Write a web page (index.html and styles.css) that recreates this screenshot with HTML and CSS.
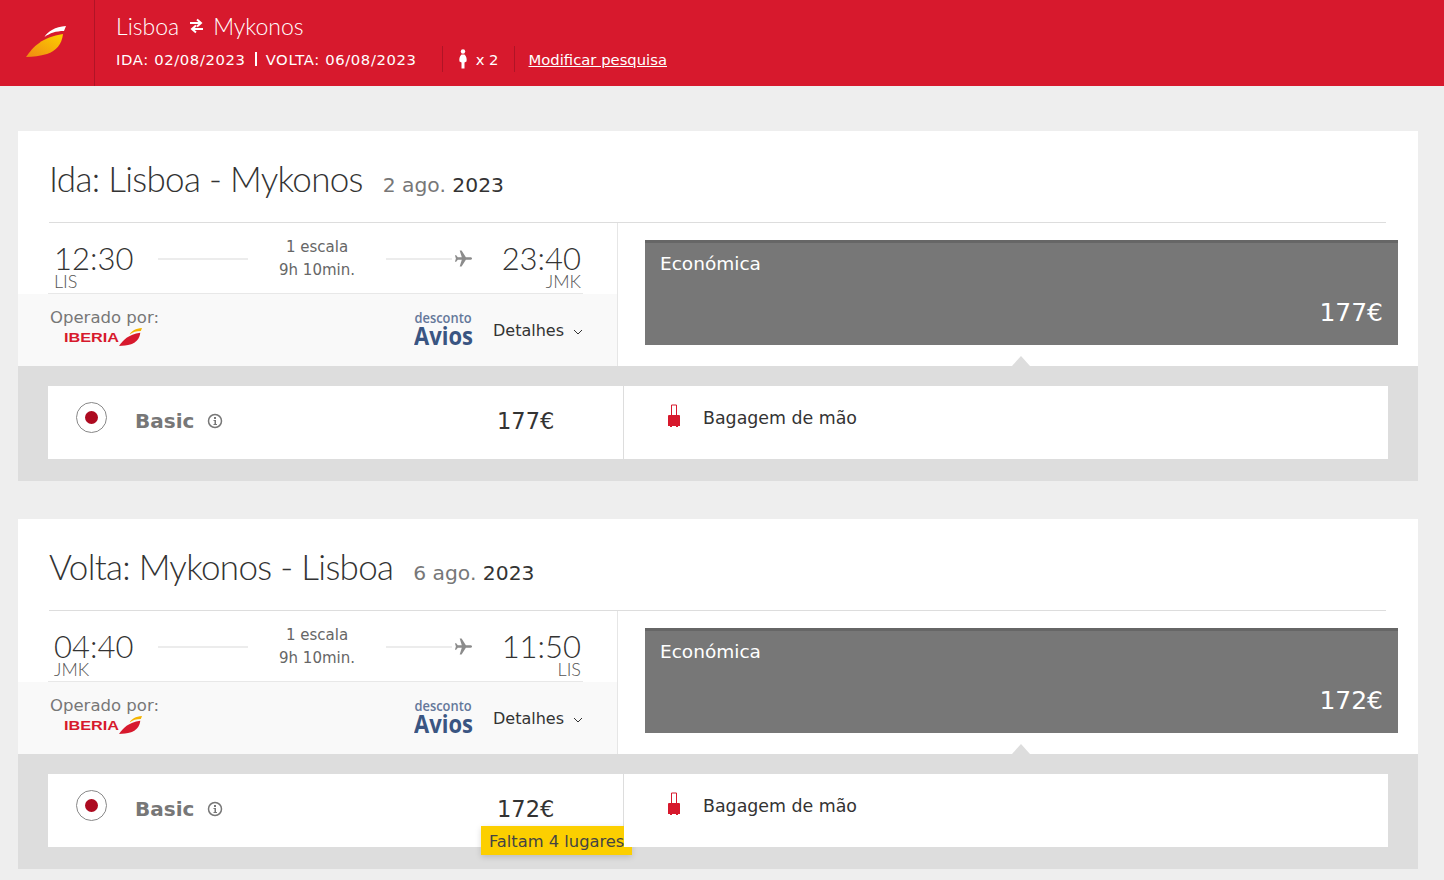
FILE: index.html
```html
<!DOCTYPE html>
<html lang="pt">
<head>
<meta charset="utf-8">
<title>Iberia</title>
<link rel="stylesheet" href="styles.css">
</head>
<body>
<header class="top">
  <div class="brand">
    <svg class="brand-logo" viewBox="26 26 40 31"><defs><linearGradient id="leaf" x1="0" y1="1" x2="1" y2="0"><stop offset="0" stop-color="#f08a12"/><stop offset="1" stop-color="#fcd000"/></linearGradient></defs><path fill="#fff" d="M44.500 37C48 31 55 27 66 26L64 31C56 31 50 33 44.500 37Z"/><path fill="url(#leaf)" d="M26 57C33 47 42 37 63 34C62 44 56 51 47 54C40 56 33 57 26 57Z"/></svg>
  </div>
  <div class="trip">
    <div class="route"><span>Lisboa</span>
      <svg class="swap" viewBox="0 0 15 16"><path fill="none" stroke="#fff" stroke-width="2" d="M1 5H12M8 1.500L12 5L8 8.500M14 11H3M7 7.500L3 11L7 14.500"/></svg>
      <span>Mykonos</span></div>
    <div class="meta">
      <span class="dates">IDA: 02/08/2023</span><span class="bar"></span><span class="dates">VOLTA: 06/08/2023</span>
      <span class="pax"><svg class="person" viewBox="0 0 10 20"><circle cx="5" cy="2.500" r="2.200" fill="#fff"/><path fill="#fff" d="M3.500 5.500H6.500C8.500 7 9 10 8.500 12.500L6.500 13.500V19.500H3.500V13.500L1.500 12.500C1 10 1.500 7 3.500 5.500Z"/></svg>x 2</span>
      <a class="modify" href="#">Modificar pesquisa</a>
    </div>
  </div>
</header>

<main class="page">
  <section class="card">
    <h2 class="heading"><span class="heading-main">Ida: Lisboa - Mykonos</span><span class="heading-date"><span class="muted">2 ago.</span> 2023</span></h2>
    <div class="flight">
      <div class="left">
        <div class="times">
          <div class="stamp"><div class="clock">12:30</div><div class="code">LIS</div></div>
          <span class="line line-a"></span>
          <div class="stops"><div>1 escala</div><div>9h 10min.</div></div>
          <span class="line line-b"></span>
          <svg class="plane" viewBox="0 0 20 20"><path fill="#8c8c8c" d="M19 10C19 9 18 8.700 17 8.700H12.500L8 1.500H6L8.200 8.700H4L2.300 6.500H1L2 10L1 13.500H2.300L4 11.300H8.200L6 18.500H8L12.500 11.300H17C18 11.300 19 11 19 10Z"/></svg>
          <div class="stamp stamp-end"><div class="clock">23:40</div><div class="code">JMK</div></div>
        </div>
        <div class="extra">
          <div class="operator">
            <div class="op-label">Operado por:</div>
            <div class="op-logo"><span class="iberia">IBERIA</span><svg class="iberia-mark" viewBox="26 26 40 31"><path fill="#f5b400" d="M44.500 37C48 31 55 27 66 26L64 31C56 31 50 33 44.500 37Z"/><path fill="#d7192d" d="M26 57C33 47 42 37 63 34C62 44 56 51 47 54C40 56 33 57 26 57Z"/></svg></div>
          </div>
          <div class="avios"><span class="avios-top">desconto</span><span class="avios-main">Avios</span></div>
          <div class="details">Detalhes<svg class="chevron" viewBox="0 0 10 6"><path d="M1 1L5 5L9 1" fill="none" stroke="#333" stroke-width="1"/></svg></div>
        </div>
      </div>
      <div class="right">
        <div class="fare"><div class="fare-name">Económica</div><div class="fare-price">177€</div></div>
      </div>
    </div>
    <div class="band">
      <div class="option">
        <div class="opt-left">
          <span class="radio"><span class="radio-dot"></span></span>
          <span class="opt-name">Basic</span>
          <svg class="info" viewBox="0 0 16 16"><circle cx="8" cy="8" r="6.500" fill="none" stroke="#777" stroke-width="1.500"/><path fill="#777" d="M7 4H9V6H7ZM6.500 7H9V11H10V12H6.500V11H7.500V8H6.500Z"/></svg>
          <span class="opt-price">177€</span>
        </div>
        <div class="opt-right">
          <svg class="bag" viewBox="0 0 14 24"><path fill="none" stroke="#d7192d" d="M4.500 11V1H9.500V11"/><path fill="#d7192d" d="M2 11H12Q13 11 13 12V22H11V23H9V22H5V23H3V22H1V12Q1 11 2 11Z"/></svg>
          <span class="bag-label">Bagagem de mão</span>
        </div>
      </div>
    </div>
  </section>

  <section class="card">
    <h2 class="heading"><span class="heading-main">Volta: Mykonos - Lisboa</span><span class="heading-date"><span class="muted">6 ago.</span> 2023</span></h2>
    <div class="flight">
      <div class="left">
        <div class="times">
          <div class="stamp"><div class="clock">04:40</div><div class="code">JMK</div></div>
          <span class="line line-a"></span>
          <div class="stops"><div>1 escala</div><div>9h 10min.</div></div>
          <span class="line line-b"></span>
          <svg class="plane" viewBox="0 0 20 20"><path fill="#8c8c8c" d="M19 10C19 9 18 8.700 17 8.700H12.500L8 1.500H6L8.200 8.700H4L2.300 6.500H1L2 10L1 13.500H2.300L4 11.300H8.200L6 18.500H8L12.500 11.300H17C18 11.300 19 11 19 10Z"/></svg>
          <div class="stamp stamp-end"><div class="clock">11:50</div><div class="code">LIS</div></div>
        </div>
        <div class="extra">
          <div class="operator">
            <div class="op-label">Operado por:</div>
            <div class="op-logo"><span class="iberia">IBERIA</span><svg class="iberia-mark" viewBox="26 26 40 31"><path fill="#f5b400" d="M44.500 37C48 31 55 27 66 26L64 31C56 31 50 33 44.500 37Z"/><path fill="#d7192d" d="M26 57C33 47 42 37 63 34C62 44 56 51 47 54C40 56 33 57 26 57Z"/></svg></div>
          </div>
          <div class="avios"><span class="avios-top">desconto</span><span class="avios-main">Avios</span></div>
          <div class="details">Detalhes<svg class="chevron" viewBox="0 0 10 6"><path d="M1 1L5 5L9 1" fill="none" stroke="#333" stroke-width="1"/></svg></div>
        </div>
      </div>
      <div class="right">
        <div class="fare"><div class="fare-name">Económica</div><div class="fare-price">172€</div></div>
      </div>
    </div>
    <div class="band">
      <div class="option">
        <div class="opt-left">
          <span class="radio"><span class="radio-dot"></span></span>
          <span class="opt-name">Basic</span>
          <svg class="info" viewBox="0 0 16 16"><circle cx="8" cy="8" r="6.500" fill="none" stroke="#777" stroke-width="1.500"/><path fill="#777" d="M7 4H9V6H7ZM6.500 7H9V11H10V12H6.500V11H7.500V8H6.500Z"/></svg>
          <span class="opt-price">172€</span>
          <span class="seats">Faltam 4 lugares</span>
        </div>
        <div class="opt-right">
          <svg class="bag" viewBox="0 0 14 24"><path fill="none" stroke="#d7192d" d="M4.500 11V1H9.500V11"/><path fill="#d7192d" d="M2 11H12Q13 11 13 12V22H11V23H9V22H5V23H3V22H1V12Q1 11 2 11Z"/></svg>
          <span class="bag-label">Bagagem de mão</span>
        </div>
      </div>
    </div>
  </section>
</main>
</body>
</html>
```
FILE: styles.css
```css
* { box-sizing: border-box; }
html, body { margin: 0; padding: 0; }
body {
  background: #eeeeee;
  font-family: "DejaVu Sans", Verdana, sans-serif;
  color: #333;
  height: 880px;
  overflow: hidden;
}
.top {
  height: 86px;
  background: #d7192d;
  color: #fff;
  display: flex;
}
.brand {
  width: 95px;
  border-right: 1px solid #b01426;
  display: flex;
  padding: 26px 0 0 26px;
}
.brand-logo { width: 40px; height: 31px; }
.trip { padding: 12px 0 0 21px; }
.route {
  font-family: Lato, "Open Sans", sans-serif;
  font-weight: 300;
  font-size: 23px;
  line-height: 28px;
  display: flex;
  align-items: center;
  height: 28px;
}
.swap { width: 15px; height: 16px; margin: 0 9px 0 10px; }
.meta {
  display: flex;
  align-items: center;
  font-size: 14.800px;
  height: 26px;
  margin-top: 6px;
}
.dates { white-space: nowrap; letter-spacing: .62px; }
.bar { width: 2px; height: 14px; background: #fff; margin: 0 9px; }
.pax {
  display: flex;
  align-items: center;
  height: 26px;
  margin-left: 25px;
  padding: 0 15px;
  border-left: 1px solid #b01426;
  border-right: 1px solid #b01426;
  white-space: nowrap;
}
.person { width: 10px; height: 20px; margin-right: 8px; }
.modify { color: #fff; margin-left: 14px; text-decoration: underline; white-space: nowrap; }

.page { padding: 45px 26px 0 18px; display: flex; flex-direction: column; gap: 38px; }
.card { background: #fff; height: 350px; display: flex; flex-direction: column; }
.heading {
  margin: 0 32px 0 31px;
  height: 92px;
  border-bottom: 1px solid #ddd;
  font-weight: normal;
  display: flex;
  align-items: baseline;
  padding-top: 22px;
  white-space: nowrap;
}
.heading-main {
  font-family: Lato, "Open Sans", sans-serif;
  font-weight: 300;
  font-size: 35px;
  color: #333;
  line-height: 50px;
  letter-spacing: -.7px;
}
.heading-date { font-size: 20.300px; margin-left: 20px; color: #333; }
.muted { color: #777; }

.flight { display: flex; height: 143px; }
.left { width: 600px; border-right: 1px solid #e6e6e6; display: flex; flex-direction: column; }
.times {
  height: 71px;
  margin: 0 34px 0 30px;
  border-bottom: 1px solid #e8e8e8;
  display: flex;
  padding: 20px 2px 0 6px;
}
.stamp { width: 90px; flex: none; }
.stamp-end { text-align: right; width: 108px; }
.clock {
  font-family: Lato, "Open Sans", sans-serif;
  font-weight: 300;
  font-size: 31px;
  line-height: 30px;
  color: #333;
}
.code {
  font-family: Lato, "Open Sans", sans-serif;
  font-weight: 300;
  font-size: 18px;
  line-height: 16px;
  color: #555;
}
.line { height: 2px; background: #ececec; margin-top: 15px; flex: none; }
.line-a { width: 90px; margin-left: 14px; }
.line-b { width: 66px; }
.stops { width: 138px; flex: none; text-align: center; font-size: 15px; line-height: 23px; color: #666; margin-top: -7px; }
.plane { width: 19px; height: 19px; margin-top: 6px; margin-left: 2px; flex: none; }

.extra {
  flex: 1;
  background: #f9f9f9;
  display: flex;
  padding: 14px 0 0 32px;
}
.op-label { font-size: 16.500px; color: #777; line-height: 20px; }
.op-logo { display: flex; align-items: center; padding-left: 14px; margin-top: -1px; height: 20px; }
.iberia {
  font-family: "Liberation Sans", Arial, sans-serif;
  font-weight: bold;
  font-size: 13px;
  color: #d7192d;
  transform: scaleX(1.25);
  transform-origin: left;
  width: 55px;
}
.iberia-mark { width: 23px; height: 18px; }
.operator { width: 363px; }
.avios {
  width: 60px;
  display: flex;
  flex-direction: column;
  align-items: center;
  color: #3a5582;
  font-family: "Open Sans", sans-serif;
  margin-top: 2px;
}
.avios-top { font-size: 14px; line-height: 15px; font-weight: 600; transform: scaleX(.92); color: #64779a; }
.avios-main { font-size: 25px; line-height: 21px; font-weight: 700; transform: scaleX(.88); }
.details { display: flex; align-items: center; font-size: 16px; margin-left: 20px; height: 20px; margin-top: 12px; white-space: nowrap; }
.chevron { width: 10px; height: 6px; margin-left: 9px; margin-top: 3px; }

.right { flex: 1; padding: 17px 20px 0 27px; position: relative; }
.right::after {
  content: "";
  position: absolute;
  left: 394px;
  bottom: 0;
  border-left: 9px solid transparent;
  border-right: 9px solid transparent;
  border-bottom: 10px solid #ddd;
}
.fare {
  height: 105px;
  background: #777;
  border-top: 3px solid #666;
  color: #fff;
  display: flex;
  flex-direction: column;
  justify-content: space-between;
  padding: 9px 15px 17px 15px;
}
.fare-name { font-size: 18.500px; line-height: 24px; }
.fare-price { font-size: 25px; line-height: 30px; text-align: right; }

.band { flex: 1; background: #ddd; padding: 20px 30px 22px 30px; }
.option { background: #fff; height: 73px; display: flex; }
.opt-left { width: 575px; position: relative; }
.radio {
  position: absolute;
  left: 28px;
  top: 16px;
  width: 31px;
  height: 31px;
  border: 1px solid #888;
  border-radius: 50%;
  display: flex;
  align-items: center;
  justify-content: center;
}
.radio-dot { width: 13px; height: 13px; border-radius: 50%; background: #ad0a20; }
.opt-name { position: absolute; left: 87px; top: 21px; font-size: 20px; line-height: 28px; font-weight: bold; color: #777; }
.info { position: absolute; left: 159px; top: 27px; width: 16px; height: 16px; }
.opt-price { position: absolute; left: 449px; top: 19px; font-size: 22.500px; line-height: 32px; color: #333; }
.seats {
  position: absolute;
  left: 433px;
  top: 52px;
  width: 151px;
  height: 29px;
  background: #fccf00;
  box-shadow: 0 2px 6px rgba(0, 0, 0, .15);
  font-size: 16.300px;
  line-height: 31px;
  padding-left: 8px;
  color: #444;
  white-space: nowrap;
  z-index: 2;
  clip-path: polygon(-10px -10px, 143px -10px, 143px 21px, 161px 21px, 161px 40px, -10px 40px);
}
.opt-right {
  flex: 1;
  display: flex;
  align-items: flex-start;
  border-left: 1px solid #ddd;
  padding: 20px 0 0 43px;
}
.bag { width: 14px; height: 24px; margin-right: 22px; margin-top: -2px; }
.bag-label { font-size: 17.400px; line-height: 24px; color: #333; }
```
